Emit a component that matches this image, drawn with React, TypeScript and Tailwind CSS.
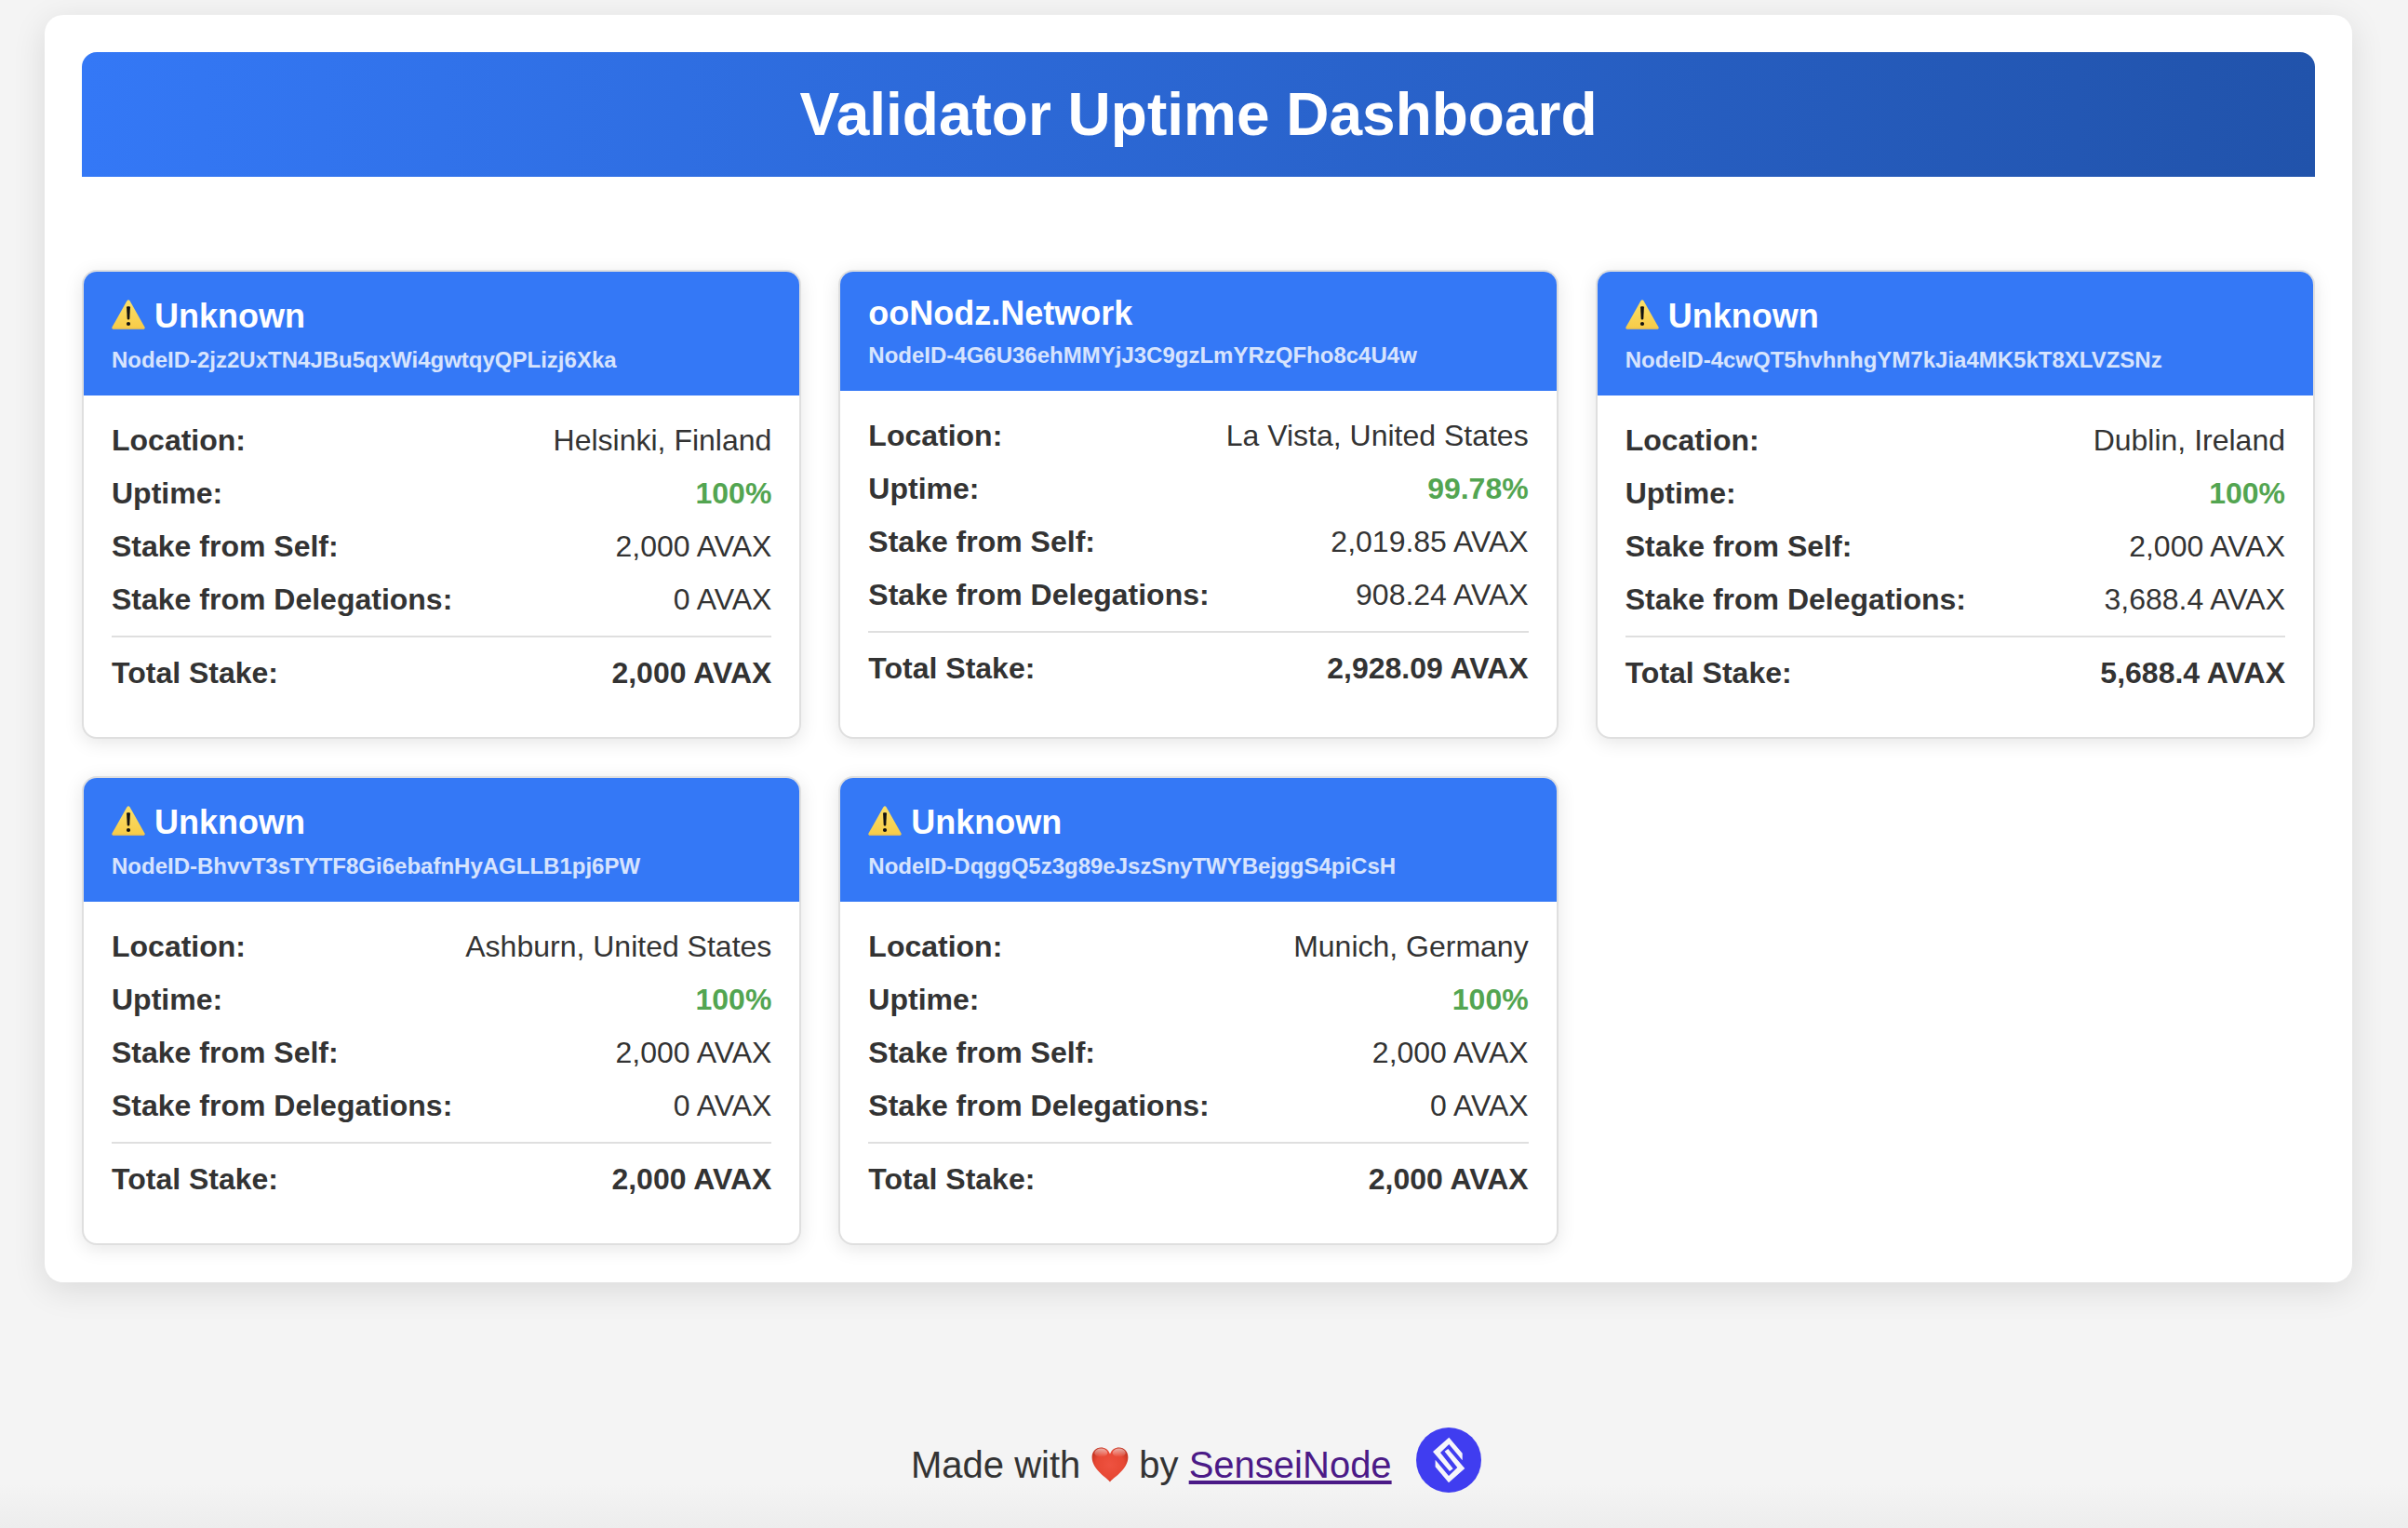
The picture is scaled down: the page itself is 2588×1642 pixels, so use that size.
import React from "react";

type Validator = {
  name?: string;
  nodeId: string;
  location: string;
  uptime: string;
  self: string;
  delegations: string;
  total: string;
};

const validators: Validator[] = [
  {
    nodeId: "NodeID-2jz2UxTN4JBu5qxWi4gwtqyQPLizj6Xka",
    location: "Helsinki, Finland",
    uptime: "100%",
    self: "2,000 AVAX",
    delegations: "0 AVAX",
    total: "2,000 AVAX",
  },
  {
    name: "ooNodz.Network",
    nodeId: "NodeID-4G6U36ehMMYjJ3C9gzLmYRzQFho8c4U4w",
    location: "La Vista, United States",
    uptime: "99.78%",
    self: "2,019.85 AVAX",
    delegations: "908.24 AVAX",
    total: "2,928.09 AVAX",
  },
  {
    nodeId: "NodeID-4cwQT5hvhnhgYM7kJia4MK5kT8XLVZSNz",
    location: "Dublin, Ireland",
    uptime: "100%",
    self: "2,000 AVAX",
    delegations: "3,688.4 AVAX",
    total: "5,688.4 AVAX",
  },
  {
    nodeId: "NodeID-BhvvT3sTYTF8Gi6ebafnHyAGLLB1pj6PW",
    location: "Ashburn, United States",
    uptime: "100%",
    self: "2,000 AVAX",
    delegations: "0 AVAX",
    total: "2,000 AVAX",
  },
  {
    nodeId: "NodeID-DqggQ5z3g89eJszSnyTWYBejggS4piCsH",
    location: "Munich, Germany",
    uptime: "100%",
    self: "2,000 AVAX",
    delegations: "0 AVAX",
    total: "2,000 AVAX",
  },
];

function WarningIcon() {
  return (
    <svg viewBox="0 0 36 32" className="mt-[6px] mr-[10px] h-8 w-9 shrink-0" aria-label="Warning">
      <defs>
        <linearGradient id="warn" x1="0" y1="0" x2="0" y2="1">
          <stop offset="0" stopColor="#fbe06a" />
          <stop offset="1" stopColor="#f7cb47" />
        </linearGradient>
      </defs>
      <path
        d="M16.6 1.1Q18 -0.7 19.4 1.1L35.5 29.6Q36.3 31.7 34.2 31.8H1.8Q-0.3 31.7 0.5 29.6Z"
        fill="url(#warn)"
      />
      <path d="M1 31.3H35" stroke="#d3b263" strokeWidth="0.8" />
      <path d="M16.1 8.2Q16.1 7.2 17 7.2H19Q19.9 7.2 19.9 8.2L19.3 20.4Q19.2 21.4 18 21.4Q16.8 21.4 16.7 20.4Z" fill="#111" />
      <circle cx="18" cy="26" r="2.1" fill="#111" />
    </svg>
  );
}

function HeartIcon() {
  return (
    <svg viewBox="0 0 40 38" className="mt-[9px] mr-[11px] ml-[12px] h-[38px] w-10" aria-label="love">
      <defs>
        <radialGradient id="heart" cx="0.5" cy="0.5" r="0.6">
          <stop offset="0" stopColor="#ee5240" />
          <stop offset="0.65" stopColor="#e74834" />
          <stop offset="1" stopColor="#c0301d" />
        </radialGradient>
        <linearGradient id="gloss" x1="0" y1="0" x2="0" y2="1">
          <stop offset="0" stopColor="#ffffff" stopOpacity="0.6" />
          <stop offset="1" stopColor="#ffffff" stopOpacity="0" />
        </linearGradient>
      </defs>
      <path
        d="M20 37.6C17.5 33.5 0.6 24.5 0.6 11C0.6 4.8 4.8 0.6 10.2 0.6C14.8 0.6 18.4 3.2 20 7.6C21.6 3.2 25.2 0.6 29.8 0.6C35.2 0.6 39.4 4.8 39.4 11C39.4 24.5 22.5 33.5 20 37.6Z"
        fill="url(#heart)"
      />
      <ellipse cx="10.3" cy="6.2" rx="7" ry="4.6" fill="url(#gloss)" />
      <ellipse cx="29.7" cy="6.2" rx="7" ry="4.6" fill="url(#gloss)" />
    </svg>
  );
}

function SenseiLogo() {
  return (
    <svg viewBox="0 0 70 70" className="ml-[26px] size-[70px]" aria-label="SenseiNode logo">
      <circle cx="35" cy="35" r="35" fill="#403df0" />
      <g fill="#f6f5fb">
        <polygon points="35.3,10.7 49.7,27.7 49.7,35.3 35.3,18 26,27 39.7,44.3 36,47 18,26" />
        <polygon points="35,59.3 20.6,42.3 20.6,34.7 35,52 44.3,43 30.6,25.7 34.3,23 52.3,44" />
      </g>
    </svg>
  );
}

function Row({ label, value, strong }: { label: string; value: string; strong?: string }) {
  return (
    <div className="flex justify-between leading-[37px]">
      <span className="font-bold">{label}</span>
      <span className={strong}>{value}</span>
    </div>
  );
}

function Card({ v }: { v: Validator }) {
  return (
    <article className="overflow-hidden rounded-2xl border-2 border-[#dfdfdf] bg-white shadow-[0_4px_20px_rgba(0,0,0,0.1)]">
      <header className="bg-[#3478f6] px-[30px] py-6 font-bold text-white">
        {v.name ? (
          <h2 className="text-4xl leading-[41px]">{v.name}</h2>
        ) : (
          <h2 className="flex h-[46px] text-4xl leading-[48px]">
            <WarningIcon />
            Unknown
          </h2>
        )}
        <p className="mt-[11px] text-2xl leading-7 text-white/80">{v.nodeId}</p>
      </header>
      <div className="flex flex-col gap-5 p-[30px] text-[32px]">
        <Row label="Location:" value={v.location} />
        <Row label="Uptime:" value={v.uptime} strong="font-bold text-[#53a551]" />
        <Row label="Stake from Self:" value={v.self} />
        <Row label="Stake from Delegations:" value={v.delegations} />
        <div className="border-t-2 border-[#dfdfdf] pt-5">
          <Row label="Total Stake:" value={v.total} strong="font-bold" />
        </div>
      </div>
    </article>
  );
}

export default function App() {
  return (
    <div className="flex h-[1642px] flex-col bg-[linear-gradient(to_bottom,#f4f4f4_1595px,#ededed_1642px)] pt-4 pr-[60px] pl-12 font-['Liberation_Sans',Arial,sans-serif] text-[#333]">
      <main className="h-[1362px] rounded-[20px] bg-white p-10 shadow-[0_8px_36px_rgba(0,0,0,0.11)]">
        <header className="rounded-t-2xl bg-[linear-gradient(90deg,#3478f6,#2153ab)] py-[30px] text-center">
          <h1 className="text-[64px] leading-[74px] font-bold text-white">Validator Uptime Dashboard</h1>
        </header>
        <section className="mt-[100px] grid auto-rows-[504px] grid-cols-3 gap-10">
          {validators.map((v) => (
            <Card key={v.nodeId} v={v} />
          ))}
        </section>
      </main>
      <footer className="mt-[156px] ml-[931px] flex h-[70px] items-center text-[40px] leading-[46px] whitespace-pre">
        <span className="mt-[9px]">Made with</span>
        <HeartIcon />
        <span className="mt-[9px]">
          by{" "}
          <a className="text-[#4b1a87] underline decoration-4 underline-offset-[3px] [text-decoration-skip-ink:none]" href="#">
            SenseiNode
          </a>
        </span>
        <SenseiLogo />
      </footer>
    </div>
  );
}
